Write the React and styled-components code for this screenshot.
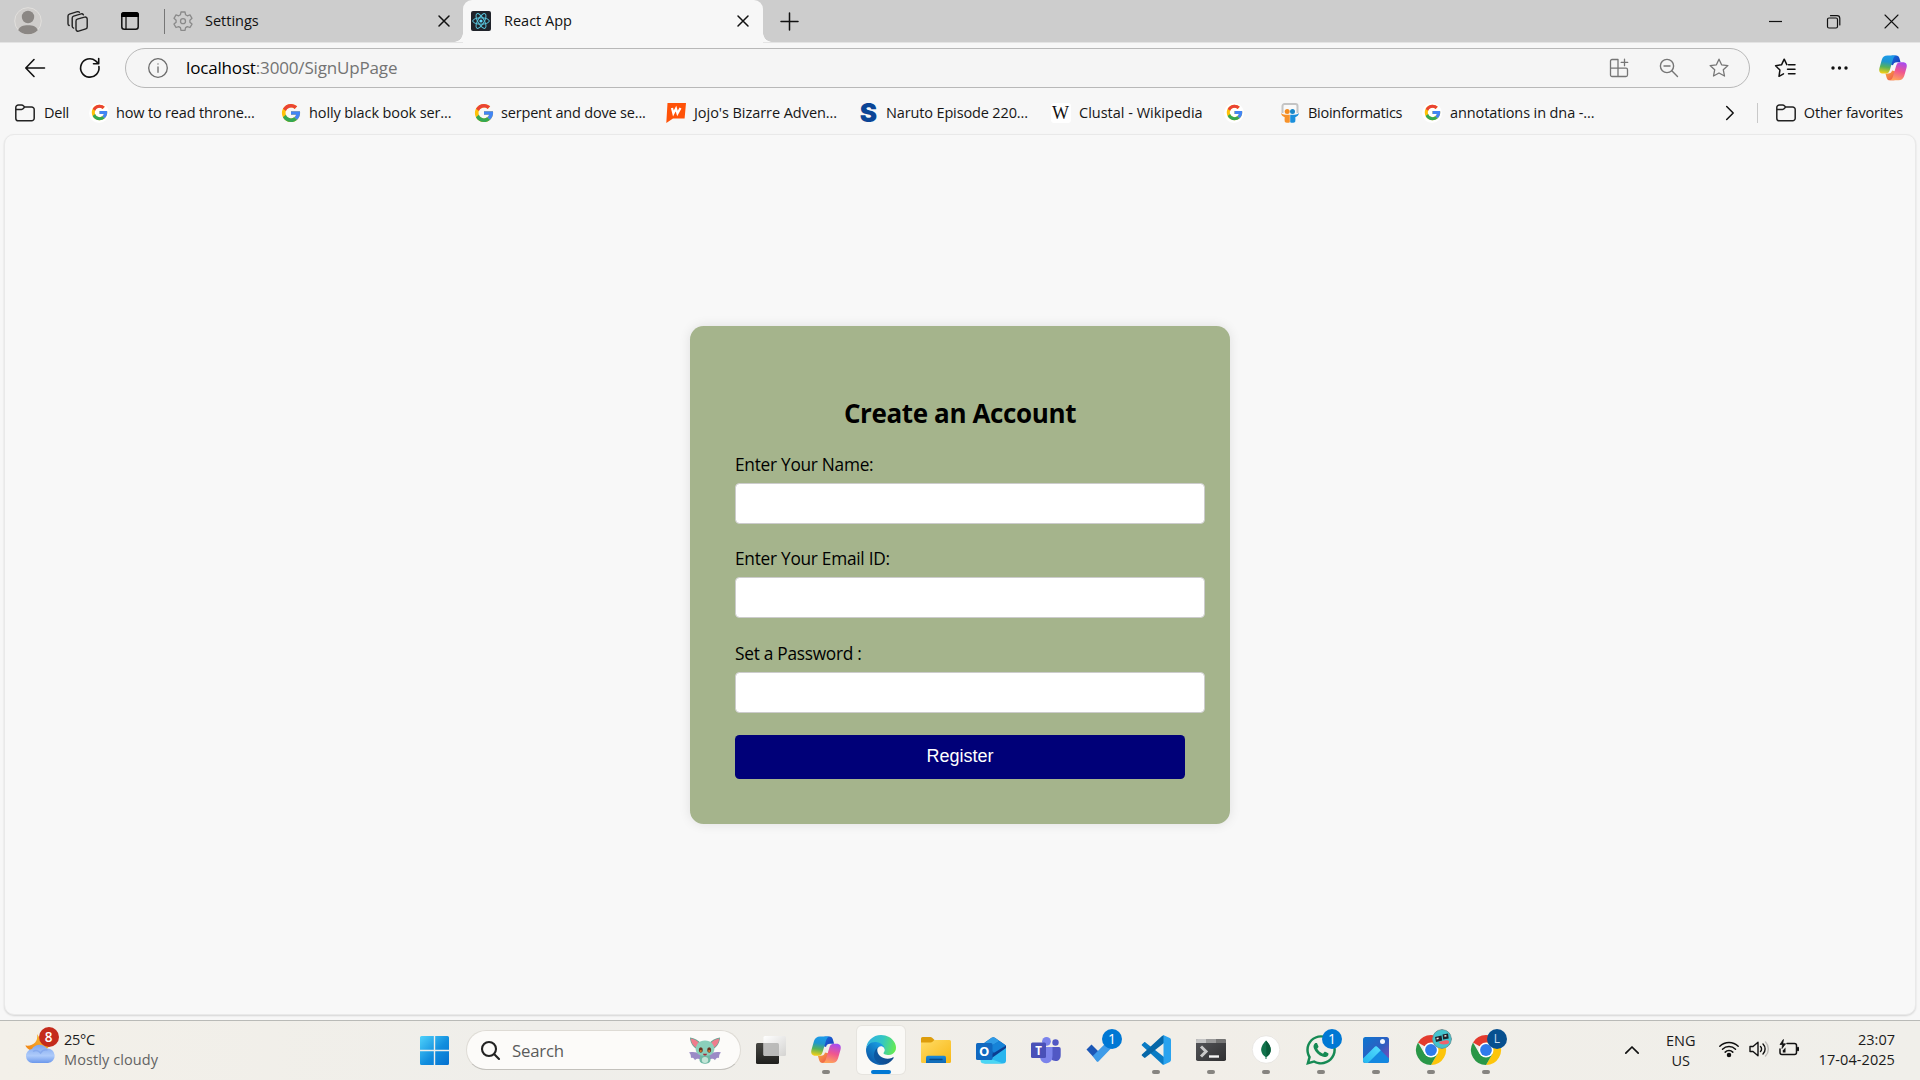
import React from "react";
import styled, { createGlobalStyle } from "styled-components";
import { FaWhatsapp } from "react-icons/fa";

const GlobalStyle = createGlobalStyle`
  * { box-sizing: border-box; }
  body { margin: 0; overflow: hidden; background: #f7f7f7; }
`;

const ui = `"Open Sans", "Noto Sans", sans-serif`;

const Screen = styled.div`
  width: 1920px;
  height: 1080px;
  display: flex;
  flex-direction: column;
  background: #f7f7f7;
  font-family: ${ui};
  font-size: 14.5px;
  color: #1b1b1b;
  overflow: hidden;
  svg { display: block; flex: none; overflow: visible; }
`;

const Label = styled.span`
  white-space: pre;
  letter-spacing: ${(p) => p.$track || 0}px;
  color: ${(p) => p.$color || "inherit"};
`;

/* ---------- tab strip ---------- */

const TabStrip = styled.header`
  height: 42px;
  flex: none;
  display: flex;
  align-items: center;
  background: #cdcdcd;
  box-shadow: 0 1px 0 #e4e4e4;
`;

const StripTools = styled.div`
  width: 164px;
  display: flex;
  align-items: center;
  padding-left: 14px;
  gap: 25px;
`;

const StripEnd = styled.div`
  margin-left: 8px;
`;

const InactiveTab = styled.div`
  width: 299px;
  height: 25px;
  display: flex;
  align-items: center;
  gap: 12px;
  padding: 0 14px 0 8px;
  border-left: 1px solid #767676;
`;

const ActiveTab = styled.div`
  position: relative;
  width: 300px;
  height: 43px;
  margin-bottom: -1px;
  display: flex;
  align-items: center;
  gap: 13px;
  padding: 0 15px 1px 8px;
  background: #f7f7f7;
  border-radius: 9px 9px 0 0;
  &::before, &::after {
    content: "";
    position: absolute;
    bottom: 1px;
    width: 9px;
    height: 9px;
  }
  &::before { left: -9px; background: radial-gradient(circle at 0 0, transparent 8.5px, #f7f7f7 9px); }
  &::after { right: -9px; background: radial-gradient(circle at 100% 0, transparent 8.5px, #f7f7f7 9px); }
`;

const TabTitle = styled(Label)`
  flex: 1;
  color: #111;
  line-height: 20px;
  margin-top: -1px;
`;

const NewTab = styled.div`
  flex: 1;
  padding-left: 18px;
`;

const WindowButtons = styled.div`
  display: flex;
  align-items: center;
  gap: 45px;
  padding-right: 22px;
`;

/* ---------- toolbar ---------- */

const Toolbar = styled.div`
  height: 50px;
  flex: none;
  display: flex;
  align-items: center;
  padding: 2px 13px 0 25px;
`;

const NavButtons = styled.div`
  width: 100px;
  display: flex;
  align-items: center;
  gap: 35px;
`;

const AddressBar = styled.div`
  width: 1625px;
  height: 40px;
  display: flex;
  align-items: center;
  padding: 0 20px 0 22px;
  border: 1px solid #b8b8b8;
  border-radius: 20px;
  background: #f5f5f5;
`;

const Url = styled.div`
  flex: 1;
  margin-left: 18px;
  font-size: 17px;
  line-height: 22px;
  margin-top: -1px;
`;

const AddressActions = styled.div`
  display: flex;
  align-items: center;
  gap: 30px;
`;

const ToolbarActions = styled.div`
  flex: 1;
  display: flex;
  align-items: center;
  justify-content: flex-end;
  gap: 29px;
`;

const MenuCopilot = styled.div`
  display: flex;
  align-items: center;
  gap: 24px;
`;

/* ---------- favourites ---------- */

const FavoritesBar = styled.nav`
  height: 42px;
  flex: none;
  display: flex;
  align-items: center;
  padding: 0 17px 1px 15px;
  color: #161616;
`;

const Favorite = styled.div`
  width: ${(p) => (p.$w ? `${p.$w}px` : "auto")};
  display: flex;
  align-items: center;
  gap: ${(p) => p.$gap || 8}px;
  flex: none;
`;

const FavIcon = styled.div`
  width: 20px;
  height: 20px;
  flex: none;
  display: flex;
  align-items: center;
  justify-content: center;
  border-radius: ${(p) => (p.$round ? "50%" : "3px")};
  background: ${(p) => (p.$plate ? "#fff" : "transparent")};
`;

const WikiGlyph = styled.span`
  font: 18px/20px "Liberation Serif", serif;
  color: #111;
  margin-left: -1px;
`;

const SGlyph = styled.span`
  font: 900 26px/20px "Inter", sans-serif;
  color: #0b4596;
  margin-left: -1px;
`;

const FavoritesEnd = styled.div`
  margin-left: auto;
  display: flex;
  align-items: center;
`;

const Divider = styled.div`
  width: 1px;
  height: 20px;
  margin: 0 18px 0 23px;
  background: #c9c9c9;
`;

/* ---------- page ---------- */

const Viewport = styled.main`
  height: 881px;
  flex: none;
  margin: 0 4px;
  display: flex;
  justify-content: center;
  align-items: flex-start;
  padding-top: 191px;
  border: 1px solid #e9e9e9;
  border-radius: 10px;
  background: #f8f8f8;
  box-shadow: 0 1px 2px rgba(0, 0, 0, 0.14);
`;

const Card = styled.form`
  width: 540px;
  height: 498px;
  padding: 69px 45px 0;
  border-radius: 13.5px;
  background: #a5b48c;
  box-shadow: 0 0 12px rgba(0, 0, 0, 0.1);
  color: #000;
`;

const Title = styled.h2`
  margin: 0 0 22px;
  font-size: 26px;
  font-weight: 700;
  line-height: 36px;
  letter-spacing: -0.38px;
  text-align: center;
  white-space: nowrap;
`;

const Field = styled.label`
  display: block;
  height: 71px;
  margin-bottom: 23.3px;
  font-size: 17.3px;
  line-height: 24.8px;
  letter-spacing: -0.27px;
`;

const Input = styled.input`
  display: block;
  width: 470px;
  height: 41px;
  margin-top: 5.2px;
  padding: 9px;
  border: 1px solid #ccc;
  border-radius: 4.5px;
  background: #fff;
  outline: none;
`;

const Register = styled.button`
  display: block;
  width: 450px;
  height: 44px;
  margin-top: -24.2px;
  padding: 0 0 1px;
  border: 0;
  border-radius: 4.5px;
  background: #000078;
  color: #fff;
  font: 18px "Liberation Sans", Arial, sans-serif;
`;

const Fields = styled.div`
  padding-bottom: 23.3px;
`;

/* ---------- taskbar ---------- */

const Taskbar = styled.footer`
  height: 60px;
  margin-top: 5px;
  flex: none;
  display: grid;
  grid-template-columns: 420px 46px 277.5px 770px 1fr;
  border-top: 1px solid #b9bab7;
  background: linear-gradient(90deg, #f3f0e9, #efeeea 28%, #f1eee8 60%, #f0efea);
`;

const Weather = styled.div`
  display: flex;
  padding: 13px 0 0 24.5px;
  gap: 9.5px;
  line-height: 20px;
`;

const WeatherIcon = styled.div`
  position: relative;
  width: 30px;
  height: 30px;
`;

const Stack = styled.div`
  display: flex;
  flex-direction: column;
  align-items: ${(p) => p.$align || "flex-start"};
  line-height: 20px;
  margin-top: ${(p) => p.$top || 0}px;
`;

const Badge = styled.span`
  position: absolute;
  left: ${(p) => (p.$left === undefined ? 25 : p.$left)}px;
  top: ${(p) => (p.$top === undefined ? 3 : p.$top)}px;
  width: 20px;
  height: 20px;
  border-radius: 50%;
  display: flex;
  align-items: center;
  justify-content: center;
  overflow: hidden;
  background: ${(p) => p.$bg || "#0078d4"};
  color: ${(p) => p.$fg || "#fff"};
  font-size: ${(p) => p.$size || 14}px;
  font-weight: ${(p) => p.$weight || 400};
  line-height: 20px;
`;

const Start = styled.div`
  padding-top: 15px;
`;

const SearchBox = styled.div`
  width: 274.5px;
  height: 40px;
  margin-top: 9px;
  display: flex;
  align-items: center;
  padding: 0 19px 0 14px;
  border: 1px solid #dedbd5;
  border-bottom-color: #c3c1bc;
  border-radius: 20px;
  background: #fcfbf9;
`;

const SearchText = styled(Label)`
  flex: 1;
  margin-left: 12px;
  font-size: 16.8px;
  color: #5b5b5b;
`;

const Apps = styled.div`
  display: grid;
  grid-template-columns: repeat(14, 55px);
  justify-items: center;
  padding-top: 5px;
`;

const AppTile = styled.div`
  position: relative;
  width: 48px;
  height: 48px;
  padding-top: 9px;
  display: flex;
  flex-direction: column;
  align-items: center;
  justify-content: space-between;
  border-radius: 5px;
  background: ${(p) => (p.$active ? "#faf9f6" : "transparent")};
  box-shadow: ${(p) => (p.$active ? "0 0 0 1px #e6e4df" : "none")};
`;

const AppIcon = styled.div`
  width: 30px;
  height: 30px;
  display: flex;
  align-items: center;
  justify-content: center;
`;

const Indicator = styled.div`
  width: ${(p) => (p.$active ? 20 : 8)}px;
  height: 4px;
  border-radius: 2px;
  background: ${(p) => (p.$active ? "#0078d4" : "#868480")};
`;

const Tray = styled.div`
  display: flex;
  align-items: flex-start;
  justify-content: flex-end;
  padding-right: 25px;
`;

const TrayIcons = styled.div`
  display: flex;
  align-items: center;
  gap: 10px;
  margin: 18px 20px 0 23px;
`;

const TrayChevron = styled.div`
  margin: 25px 27px 0 0;
`;

/* ---------- drawings ---------- */

const Line = ({ w, h = w, c = "#111", s = 1.5, children }) => (
  <svg width={w} height={h} viewBox={`0 0 ${w} ${h}`} fill="none" stroke={c} strokeWidth={s} strokeLinecap="round" strokeLinejoin="round">
    {children}
  </svg>
);

const Profile = () => (
  <svg width="28" height="28" viewBox="0 0 28 28">
    <circle cx="14" cy="14" r="13.3" fill="#cfcdcb" stroke="#e2e0dd" />
    <circle cx="14" cy="10" r="6.2" fill="#8b8784" />
    <path d="M4.2 23.3C5.6 19.5 9 18.3 14 18.3s8.400 1.200 9.800 5A13.200 13.200 0 0 1 14 27.200a13.200 13.200 0 0 1-9.800-3.900z" fill="#8b8784" />
  </svg>
);

const Workspaces = () => (
  <Line w={21} c="#222" s={1.4}>
    <path d="M10.300 8.200 17.500 6.100a2 2 0 0 1 2.700 1.900v8a2 2 0 0 1-1.400 1.900L11.600 20.200A2 2 0 0 1 9 18.300v-8a2 2 0 0 1 1.300-2.100z" />
    <path d="M16.400 3.800a2 2 0 0 0-2.300-.9L6.600 5.200A2 2 0 0 0 5.200 7.100v8.200a2 2 0 0 0 1.400 1.800" />
    <path d="M12.400 1.300a2 2 0 0 0-2-.6L2.400 3.100A2 2 0 0 0 1 5v7.700a2 2 0 0 0 1.200 1.800" />
  </Line>
);

const TabActions = () => (
  <svg width="18" height="18" viewBox="0 0 18 18">
    <rect x=".8" y=".8" width="16.400" height="16.400" rx="2.500" fill="none" stroke="#111" strokeWidth="1.500" />
    <path d="M0 3a3 3 0 0 1 3-3h12a3 3 0 0 1 3 3v2H0z" fill="#000" />
    <path d="M5 5v12" stroke="#111" strokeWidth="1.300" />
  </svg>
);

const Gear = () => (
  <Line w={20} c="#8a8a8a" s={1.3}>
    <path d="M8 1h4l.6 2.800 1.700 1 2.700-.9 2 3.400-2.100 1.900v2l2.100 1.900-2 3.400-2.700-.9-1.700 1L12 19.400H8l-.6-2.800-1.700-1-2.700.9-2-3.400 2.100-1.900v-2L1 7.300l2-3.400 2.700.9 1.700-1z" />
    <circle cx="10" cy="10.200" r="2.500" />
  </Line>
);

const Cross = ({ size = 10, s = 1.5, c }) => (
  <Line w={size} s={s} c={c}>
    <path d={`M0 0 ${size} ${size}M${size} 0 0 ${size}`} />
  </Line>
);

const ReactTile = () => (
  <svg width="20" height="20" viewBox="0 0 20 20">
    <rect width="20" height="20" rx="2" fill="#20232a" />
    <g fill="none" stroke="#58c4dc" strokeWidth="1">
      <ellipse cx="10" cy="10" rx="8.300" ry="3.200" />
      <ellipse cx="10" cy="10" rx="8.300" ry="3.200" transform="rotate(60 10 10)" />
      <ellipse cx="10" cy="10" rx="8.300" ry="3.200" transform="rotate(120 10 10)" />
    </g>
    <circle cx="10" cy="10" r="1.600" fill="#61dafb" />
  </svg>
);

const GoogleG = ({ size = 16 }) => (
  <svg width={size} height={size} viewBox="2 2 44 44">
    <path fill="#FFC107" d="M43.611 20.083H42V20H24v8h11.303c-1.649 4.657-6.080 8-11.303 8-6.627 0-12-5.373-12-12s5.373-12 12-12c3.059 0 5.842 1.154 7.961 3.039l5.657-5.657C34.046 6.053 29.268 4 24 4 12.955 4 4 12.955 4 24s8.955 20 20 20 20-8.955 20-20c0-1.341-.138-2.650-.389-3.917z" />
    <path fill="#EA4335" d="M6.306 14.691l6.571 4.819C14.655 15.108 18.961 12 24 12c3.059 0 5.842 1.154 7.961 3.039l5.657-5.657C34.046 6.053 29.268 4 24 4 16.318 4 9.656 8.337 6.306 14.691z" />
    <path fill="#34A853" d="M24 44c5.166 0 9.860-1.977 13.409-5.192l-6.190-5.238C29.211 35.091 26.715 36 24 36c-5.202 0-9.619-3.317-11.283-7.946l-6.522 5.025C9.505 39.556 16.227 44 24 44z" />
    <path fill="#4285F4" d="M43.611 20.083H42V20H24v8h11.303c-.792 2.237-2.231 4.166-4.087 5.571l6.190 5.238C36.971 39.205 44 34 44 24c0-1.341-.138-2.650-.389-3.917z" />
  </svg>
);

const Folder = () => (
  <Line w={20} h={18} c="#222" s={1.5}>
    <path d="M.8 3.500A2.600 2.600 0 0 1 3.400.9h3.100c.8 0 1.400.3 1.900.9L9.600 3h7A2.600 2.600 0 0 1 19.200 5.600v8.600a2.600 2.600 0 0 1-2.600 2.600H3.400A2.600 2.600 0 0 1 .8 14.200zM.8 5.400h5.700c.7 0 1.300-.2 1.800-.8L9.600 3" />
  </Line>
);

const Webtoon = () => (
  <svg width="20" height="20" viewBox="0 0 20 20">
    <path d="M1.500 0H20l-1.400 15.500H7L.3 20z" fill="#ff5208" />
    <path d="m6 5 1.400 5.500L10 5.600l1.500 4.900L14.500 5" fill="none" stroke="#fff" strokeWidth="2.200" />
  </svg>
);

const SlideShare = () => (
  <svg width="20" height="20" viewBox="0 0 20 20">
    <path d="M2.500 10V3a2 2 0 0 1 2-2h11a2 2 0 0 1 2 2v7" fill="#f9f9f9" stroke="#c4c4c4" strokeWidth="2" />
    <circle cx="7.200" cy="8.400" r="2.500" fill="#f38b1e" />
    <circle cx="12.500" cy="8.400" r="2.500" fill="#1787c9" />
    <path d="M1 10c2 2 4.500 1.800 8.800 1.800v7.400c-1 .9-4.300.8-5-.4-.4-1.500-.2-3-.1-4.500C2.800 13.600 1.300 12 1 10z" fill="#f7922a" />
    <path d="M19 10c-2 2-4.500 1.800-8.800 1.800v7.400c1 .9 4.300.8 5-.4.4-1.500.2-3 .1-4.500 1.900-.7 3.400-2.300 3.700-4.300z" fill="#1a8fdc" />
  </svg>
);

const Copilot = ({ id, w = 30 }) => (
  <svg width={w} height={w * 0.92} viewBox="0 0 30 27.500">
    <defs>
      <linearGradient id={`${id}a`} x1=".5" y1="0" x2=".35" y2="1">
        <stop offset="0" stopColor="#1c9bea" /><stop offset=".35" stopColor="#1e96d0" /><stop offset=".65" stopColor="#57b25a" /><stop offset="1" stopColor="#f5cf15" />
      </linearGradient>
      <linearGradient id={`${id}b`} x1=".7" y1="0" x2=".4" y2="1">
        <stop offset="0" stopColor="#a74bf0" /><stop offset=".5" stopColor="#f0568f" /><stop offset="1" stopColor="#ffa45a" />
      </linearGradient>
      <linearGradient id={`${id}c`} x1="0" y1="0" x2="1" y2="1">
        <stop offset="0" stopColor="#1670dc" /><stop offset="1" stopColor="#1a36b8" />
      </linearGradient>
      <linearGradient id={`${id}d`} x1="0" y1="0" x2="1" y2="1">
        <stop offset="0" stopColor="#f8b13c" /><stop offset="1" stopColor="#ee4a4f" />
      </linearGradient>
    </defs>
    <path d="M13.500.5h4.800c2 0 3 .9 3.600 3l1.200 4.300h-4c-2.300 0-3.500 1-4.100 3.200L12 10z" fill={`url(#${id}c)`} />
    <path d="M16.500 27h-4.800c-2 0-3-.9-3.600-3l-1.200-4.300h3c2.300 0 3.500-1 4.100-3.200L18 17.500z" fill={`url(#${id}d)`} />
    <path d="M9 .5H19c-2.600.2-3.400 2-4.200 4.800L11.600 16c-.8 2.700-1.900 3.800-4.600 3.800H4.500C1 19.800-.5 17.500.5 13.800L3 5C4 2 6 .5 9 .5z" fill={`url(#${id}a)`} />
    <path d="M21 27H11c2.600-.2 3.400-2 4.200-4.800L18.400 11.500c.8-2.700 1.900-3.800 4.600-3.800h2.500c3.500 0 5 2.300 4 6L27 22.500C26 25.500 24 27 21 27z" fill={`url(#${id}b)`} />
  </svg>
);

const starPath = "M10 1.200l2.600 5.600 6.300.8-4.600 4.200 1.200 6.200L10 15l-5.500 3 1.200-6.200L1.100 7.600l6.300-.8z";

const CloudMoon = () => (
  <svg width="30" height="30" viewBox="0 0 30 30">
    <defs>
      <linearGradient id="moon" x1="0" y1="1" x2="1" y2="0"><stop offset="0" stopColor="#f07f12" /><stop offset="1" stopColor="#f9c338" /></linearGradient>
      <linearGradient id="cloud" x1="0" y1="0" x2="0" y2="1"><stop offset="0" stopColor="#7fa6ee" /><stop offset=".6" stopColor="#aecbfa" /><stop offset="1" stopColor="#6b98ec" /></linearGradient>
    </defs>
    <path d="M12 0c3 5 7 9 13 9-1 6-6 9-12 9C7 18 2.500 15.500.3 11.500 8 12.500 13.500 8 12 0z" fill="url(#moon)" />
    <path d="M7.500 29a7 7 0 0 1-.6-13.900A9 9 0 0 1 22 14.600 7.200 7.200 0 0 1 23 29z" fill="url(#cloud)" />
    <path d="M8 17.500c3-2 6-.5 7.500 1.500 1.500-2.500 4-3.500 7-3" fill="none" stroke="#7da3ea" strokeWidth="1.500" opacity=".7" />
  </svg>
);

const WindowsLogo = () => (
  <svg width="29" height="29" viewBox="0 0 29 29">
    <defs><linearGradient id="win" gradientUnits="userSpaceOnUse" x1="0" y1="0" x2="29" y2="29"><stop offset="0" stopColor="#4fd2fb" /><stop offset=".55" stopColor="#128ede" /><stop offset="1" stopColor="#0570cf" /></linearGradient></defs>
    <path fill="url(#win)" d="M1.500 0H13.800V13.800H0V1.500A1.500 1.500 0 0 1 1.500 0zM15.200 0h12.300A1.500 1.500 0 0 1 29 1.500V13.800H15.200zM0 15.200h13.800V29H1.500A1.500 1.500 0 0 1 0 27.500zM15.200 15.200H29v12.300a1.500 1.500 0 0 1-1.500 1.500H15.200z" />
  </svg>
);

const BatCritter = () => (
  <svg width="32" height="27" viewBox="0 0 32 27">
    <path d="M12 17.500C8 15 4 14.500 0 15.500c2 1.500 1.800 3.500 2 5.500 2-.8 3 .2 4 2.200 1.500-1.700 3.500-1.700 6-.7zM20 17.500c4-2.500 8-3 12-2-2 1.500-1.800 3.500-2 5.500-2-.8-3 .2-4 2.200-1.500-1.700-3.500-1.700-6-.7z" fill="#9b8bc6" />
    <path d="M1 .5C5.500 1 9.500 3 12 6.500L7.500 12C3.500 9.500 1 5 1 .5zM31 .5C26.500 1 22.500 3 20 6.500l4.500 5.500C28.500 9.500 31 5 31 .5z" fill="#6aa694" />
    <path d="M1.800 1.500c3.700.5 6.700 2.500 8.700 5L7 10.500C4 8.500 2 5.500 1.800 1.500zM30.200 1.500c-3.700.5-6.700 2.500-8.700 5l3.500 4c3-2 5-5 5.200-9z" fill="#ef7c8d" />
    <path d="M11.500 17h9l1 5.500c0 3.500-3 4.200-5.500 4.200s-5.500-.7-5.500-4.200z" fill="#6fb8a4" />
    <path d="M16 3.500c6 0 9.300 4 9.300 8.800 0 4.200-4 6.700-9.300 6.700s-9.300-2.500-9.300-6.700c0-4.800 3.300-8.800 9.300-8.800z" fill="#8bd0bb" />
    <ellipse cx="16" cy="23" rx="3.200" ry="3" fill="#c2e5d6" />
    <ellipse cx="11.800" cy="13" rx="2" ry="2.700" fill="#6b3420" /><ellipse cx="20.200" cy="13" rx="2" ry="2.700" fill="#6b3420" />
    <circle cx="11.800" cy="14" r="1.100" fill="#d97831" /><circle cx="20.200" cy="14" r="1.100" fill="#d97831" />
    <path d="M14 16.700h4c-.3 2.500-3.700 2.500-4 0z" fill="#a72d39" />
  </svg>
);

const TaskView = () => (
  <svg width="30" height="30" viewBox="0 0 30 30">
    <defs>
      <linearGradient id="tvd" x1="0" y1="0" x2="0" y2="1"><stop offset="0" stopColor="#474743" /><stop offset="1" stopColor="#1f1f1d" /></linearGradient>
      <linearGradient id="tvl" x1="0" y1="0" x2="1" y2="1"><stop offset="0" stopColor="#fff" /><stop offset="1" stopColor="#d4d3d1" /></linearGradient>
    </defs>
    <rect x="0" y="8" width="23" height="21" rx="1.500" fill="url(#tvd)" />
    <rect x="7.500" y="1" width="22.500" height="20" rx="1.500" fill="url(#tvl)" />
    <path d="M7.500 8H21.500A1.500 1.500 0 0 1 23 9.500V21H9a1.500 1.500 0 0 1-1.500-1.500z" fill="#b3b3b1" opacity=".85" />
  </svg>
);

const Edge = () => (
  <svg width="30" height="30" viewBox="0 0 256 256">
    <defs>
      <linearGradient id="e1" x1="60" y1="178" x2="236" y2="178" gradientUnits="userSpaceOnUse"><stop offset="0" stopColor="#0c59a4" /><stop offset="1" stopColor="#114a8b" /></linearGradient>
      <linearGradient id="e2" x1="150" y1="100" x2="45" y2="215" gradientUnits="userSpaceOnUse"><stop offset="0" stopColor="#1b9de2" /><stop offset=".4" stopColor="#1384cc" /><stop offset="1" stopColor="#0d5fae" /></linearGradient>
      <linearGradient id="e3" x1="10" y1="60" x2="250" y2="120" gradientUnits="userSpaceOnUse"><stop offset="0" stopColor="#31b3e0" /><stop offset=".5" stopColor="#33c6c4" /><stop offset="1" stopColor="#66eb4f" /></linearGradient>
    </defs>
    <path fill="url(#e1)" d="M231 190.500c-3.400 1.800-6.900 3.400-10.500 4.700a101.500 101.500 0 0 1-35.900 6.500c-47.300 0-88.500-32.500-88.500-74.300 0-11.400 6.300-21.900 16.400-27.300-42.800 1.800-53.800 46.400-53.800 72.500 0 73.900 68.100 81.400 82.800 81.400 7.900 0 19.800-2.300 27-4.600l1.300-.4a128.300 128.300 0 0 0 66.600-52.800 4 4 0 0 0-5.400-5.700z" />
    <path fill="url(#e2)" d="M105.700 241.400a79.200 79.200 0 0 1-22.700-21.300 80.700 80.700 0 0 1 29.500-120c3.200-1.500 8.500-4.100 15.600-4 10.100.1 19.600 4.900 25.700 13 4 5.400 6.300 11.900 6.400 18.700 0-.2 24.500-79.600-80-79.600-43.900 0-80 41.700-80 78.200-.2 19.300 4 38.500 12.100 56a128 128 0 0 0 156.300 67.100 75.500 75.500 0 0 1-62.800-8z" />
    <path fill="url(#e3)" d="M152.300 148.900c-.9 1-3.300 2.500-3.300 5.700 0 2.600 1.700 5.100 4.700 7.200 14.400 10 41.500 8.700 41.500 8.700 10.700 0 21.100-2.900 30.300-8.300A61.400 61.400 0 0 0 256 109.400c.3-22.400-8-37.300-11.300-43.900C223.500 23.900 177.700 0 128 0A128 128 0 0 0 0 126.200c.5-36.500 36.800-66 80-66 3.500 0 23.500.3 42 10.100 16.300 8.600 24.900 19 30.800 29.200 6.200 10.700 7.300 24.100 7.300 29.500 0 5.300-2.700 13.300-7.800 19.900z" />
  </svg>
);

const Explorer = () => (
  <svg width="30" height="30" viewBox="0 0 30 30">
    <defs>
      <linearGradient id="fo" x1="0" y1="0" x2="1" y2="1"><stop offset="0" stopColor="#ffdc66" /><stop offset="1" stopColor="#f8b714" /></linearGradient>
      <linearGradient id="fb" x1="0" y1="0" x2="0" y2="1"><stop offset="0" stopColor="#1c8ad9" /><stop offset="1" stopColor="#0e68b5" /></linearGradient>
    </defs>
    <path d="M0 3.500A1.500 1.500 0 0 1 1.500 2h7.800c.8 0 1.300.2 1.900.8L13.500 5v5H0z" fill="#dd9d0c" />
    <path d="M0 7.500h9.500c.9 0 1.500-.3 2-.8l1-1c.5-.5 1.100-.7 1.800-.7h14.200A1.500 1.500 0 0 1 30 6.500v20a1.500 1.500 0 0 1-1.500 1.500h-27A1.500 1.500 0 0 1 0 26.500z" fill="url(#fo)" />
    <path d="M5 28v-5.500A1.800 1.800 0 0 1 6.800 20.700h16.400a1.800 1.800 0 0 1 1.800 1.800V28z" fill="url(#fb)" />
    <path d="M9 24.500h12" stroke="#084a86" strokeWidth="1.300" strokeLinecap="round" />
  </svg>
);

const Outlook = () => (
  <svg width="30" height="30" viewBox="0 0 30 30">
    <path d="M4.500 10.500 15.600 2.800a3 3 0 0 1 3.300 0L30 10.500 17 20z" fill="#0f5fb4" />
    <path d="m9 7.500 6.600-4.700a3 3 0 0 1 3.300 0l4.500 3.100L12 13z" fill="#2e9be6" />
    <path d="M23.400 5.900 30 10.500 19 18l-8-5z" fill="#1683d8" />
    <path d="m30 10.500-18 11v4l18-9z" fill="#0b3d91" />
    <path d="M30 13v12.500a3 3 0 0 1-3 3H8z" fill="#29b5ee" />
    <path d="M4.500 20 27 28.500H8a3.500 3.500 0 0 1-3.500-3.500z" fill="#4bd6f4" />
    <rect y="8" width="16.500" height="17" rx="1.500" fill="#1068c0" />
    <text x="8.200" y="21" fontFamily="Open Sans, sans-serif" fontSize="13" fontWeight="700" fill="#fff" textAnchor="middle">O</text>
  </svg>
);

const Teams = () => (
  <svg width="30" height="30" viewBox="0 0 30 30">
    <circle cx="24.500" cy="7.500" r="3.200" fill="#5158c4" />
    <path d="M19 12h9a1.700 1.700 0 0 1 1.700 1.700v6.500c0 3.500-2 5.800-5 5.800-4 0-5.700-3-5.700-6z" fill="#5158c4" />
    <circle cx="15.500" cy="6.300" r="4.400" fill="#7b83eb" />
    <path d="M9 12h12.500v8.500c0 5-2.500 7.700-6.200 7.700S9 25.500 9 21z" fill="#7b83eb" />
    <rect y="7.500" width="15" height="15.500" rx="1.500" fill="#4950b8" />
    <text x="7.500" y="19.500" fontFamily="Open Sans, sans-serif" fontSize="11.500" fontWeight="700" fill="#fff" textAnchor="middle">T</text>
  </svg>
);

const Todo = () => (
  <svg width="30" height="30" viewBox="0 0 30 30">
    <path d="M.5 14.500 5.500 9.500l11 11-5 6z" fill="#1b57b6" />
    <path d="M6.800 21 24.300 3.500l5.200 5.200-16.800 17.500a1.500 1.500 0 0 1-2.200 0z" fill="#3e9be8" />
  </svg>
);

const VSCode = () => (
  <svg width="30" height="30" viewBox="0 0 30 30">
    <path d="M1 9.200 3 7.400c.5-.4 1-.4 1.500 0L23 22v7.500c-.8.3-1.500 0-2-.5L.9 10.500c-.4-.4-.3-.9.100-1.300z" fill="#0a7bc4" />
    <path d="M1 20.800 3 22.600c.5.4 1 .4 1.500 0L23 8V.5c-.8-.3-1.500 0-2 .5L.9 19.500c-.4.4-.3.900.1 1.300z" fill="#0667a8" />
    <path d="M22.800 29.800c-.8.3-1.300.1-1.900-.4.700.7 1.600.1 1.600-.8V1.400c0-.9-.9-1.500-1.600-.8.600-.5 1.100-.7 1.900-.4l6 2.900c.8.400 1.200 1 1.200 1.800v20.200c0 .8-.4 1.400-1.200 1.800z" fill="#2aa3ef" />
  </svg>
);

const Terminal = () => (
  <svg width="30" height="30" viewBox="0 0 30 30">
    <defs><linearGradient id="tm" x1="0" y1="0" x2="1" y2="1"><stop offset="0" stopColor="#55565a" /><stop offset="1" stopColor="#303031" /></linearGradient></defs>
    <rect y="4" width="30" height="22" rx="1.800" fill="url(#tm)" />
    <path d="M0 8V5.500A1.500 1.500 0 0 1 1.500 4H10v4z" fill="#c5c5c5" /><path d="M10 4h10v4H10z" fill="#9a9a9a" /><path d="M20 4h8.500A1.500 1.500 0 0 1 30 5.500V8H20z" fill="#747474" />
    <path d="m5 11.500 5 5-5 5" fill="none" stroke="#c9c9c9" strokeWidth="3" />
    <path d="M13 21.500h10" stroke="#f4f4f4" strokeWidth="2.400" />
  </svg>
);

const Mongo = () => (
  <svg width="30" height="30" viewBox="0 0 30 30">
    <circle cx="15" cy="14.500" r="13.800" fill="#fff" stroke="#e4e2de" strokeWidth=".8" />
    <path d="M15 5.500c4 4 5.200 7.500 4.700 10.500-.4 2.600-2 4.500-4.200 6V24h-1v-2c-2.200-1.500-3.800-3.400-4.200-6C9.800 13 11 9.500 15 5.500z" fill="#11734c" />
    <path d="M15 5.500c4 4 5.200 7.500 4.700 10.500-.4 2.600-2 4.500-4.200 6z" fill="#0a5c3b" />
  </svg>
);

const Photos = () => (
  <svg width="30" height="30" viewBox="0 0 30 30">
    <defs>
      <linearGradient id="ph" x1="0" y1="0" x2="1" y2="1"><stop offset="0" stopColor="#0d76d0" /><stop offset=".55" stopColor="#2f5dc0" /><stop offset="1" stopColor="#8b4bb8" /></linearGradient>
      <linearGradient id="pm" x1="0" y1="1" x2="1" y2="0"><stop offset="0" stopColor="#22b4ee" /><stop offset="1" stopColor="#55ddff" /></linearGradient>
      <clipPath id="pc"><rect x="2" y="2" width="26" height="26" rx="2.500" /></clipPath>
    </defs>
    <g clipPath="url(#pc)">
      <rect x="2" y="2" width="26" height="26" fill="url(#ph)" />
      <path d="M13.300 12.200a2.400 2.400 0 0 1 3.400 0L29 24.500V28H8z" fill="#1488e0" />
      <path d="M1 24.500 13.300 12.200a2.400 2.400 0 0 1 3.400 0L19.800 15.300 6.500 28.500H1z" fill="url(#pm)" />
    </g>
    <circle cx="21.500" cy="6.500" r="2.500" fill="#f1f6fd" />
  </svg>
);

const Chrome = () => (
  <svg width="30" height="30" viewBox="0 0 30 30">
    <path d="M15 15 2 7.500A15 15 0 0 1 28 7.500z" fill="#e33b2e" />
    <path d="M28 7.500A15 15 0 0 1 15 30l6.500-11.200L15 7.500z" fill="#fdc50b" />
    <path d="M2 7.500A15 15 0 0 0 15 30l6.500-11.200L15 15 8.500 18.800z" fill="#2a9747" />
    <circle cx="15" cy="15" r="7.500" fill="#fff" />
    <circle cx="15" cy="15" r="5.900" fill="#2f7bea" />
  </svg>
);

const AvatarArt = () => (
  <svg width="20" height="20" viewBox="0 0 20 20">
    <circle cx="10" cy="10" r="9.500" fill="#43c3cd" stroke="#6e8f92" />
    <path d="m3 8 6.500-1.500.7 5L4 13zM10.500 5.500l5.500-1 .7 5-5.500 1z" fill="#20242c" />
    <path d="m4.500 9 2-.5.2 1.500-2 .5zM12.300 6.300l2-.4.2 1.500-2 .4z" fill="#f1e6df" />
    <path d="M7 13c3-.5 6-2.500 9-1.500 2 1 1 3.500-1.500 3.800-3 .4-7 .2-7.500-2.300z" fill="#f0626c" />
  </svg>
);

/* ---------- content ---------- */

const favorites = [
  { text: "Dell", icon: <Folder />, w: 74, gap: 9, track: -0.25 },
  { text: "how to read throne...", icon: <GoogleG size={17} />, plate: true, round: true, w: 192, gap: 7, track: -0.17 },
  { text: "holly black book ser...", icon: <GoogleG size={20} />, w: 193, track: -0.11 },
  { text: "serpent and dove se...", icon: <GoogleG size={20} />, w: 192, gap: 7, track: -0.18 },
  { text: "Jojo's Bizarre Adven...", icon: <Webtoon />, w: 193, track: -0.05 },
  { text: "Naruto Episode 220...", icon: <SGlyph>S</SGlyph>, w: 192, gap: 7, track: -0.14 },
  { text: "Clustal - Wikipedia", icon: <WikiGlyph>W</WikiGlyph>, plate: true, w: 173, track: 0 },
  { text: "", icon: <GoogleG size={17} />, plate: true, round: true, w: 56 },
  { text: "Bioinformatics", icon: <SlideShare />, w: 142, track: -0.27 },
  { text: "annotations in dna -...", icon: <GoogleG size={17} />, plate: true, round: true, w: 180, track: -0.11 },
];

const apps = [
  { icon: <TaskView /> },
  { icon: <Copilot id="tc" />, run: true },
  { icon: <Edge />, run: true, active: true },
  { icon: <Explorer /> },
  { icon: <Outlook /> },
  { icon: <Teams /> },
  { icon: <Todo />, badge: <Badge>1</Badge> },
  { icon: <VSCode />, run: true },
  { icon: <Terminal />, run: true },
  { icon: <Mongo />, run: true },
  { icon: <FaWhatsapp size={34} color="#168a54" />, run: true, badge: <Badge>1</Badge> },
  { icon: <Photos />, run: true },
  { icon: <Chrome />, run: true, badge: <Badge $bg="transparent"><AvatarArt /></Badge> },
  { icon: <Chrome />, run: true, badge: <Badge $bg="#07508f" $fg="#c4dcf2" $size={12}>L</Badge> },
];

const fields = [
  { label: "Enter Your Name:", type: "text" },
  { label: "Enter Your Email ID:", type: "email" },
  { label: "Set a Password :", type: "password" },
];

export default function App() {
  return (
    <Screen>
      <GlobalStyle />
      <TabStrip>
        <StripTools>
          <Profile />
          <Workspaces />
          <StripEnd><TabActions /></StripEnd>
        </StripTools>
        <InactiveTab>
          <Gear />
          <TabTitle>Settings</TabTitle>
          <Cross />
        </InactiveTab>
        <ActiveTab>
          <ReactTile />
          <TabTitle>React App</TabTitle>
          <Cross />
        </ActiveTab>
        <NewTab>
          <Line w={17}><path d="M8.500 0v17M0 8.500h17" /></Line>
        </NewTab>
        <WindowButtons>
          <Line w={13} s={1.2}><path d="M0 6.500h13" strokeLinecap="butt" /></Line>
          <Line w={13} s={1.2}>
            <path d="M2 3h7a1.500 1.500 0 0 1 1.500 1.500v7A1.500 1.500 0 0 1 9 13H2a1.500 1.500 0 0 1-1.500-1.500v-7A1.500 1.500 0 0 1 2 3zM3.500.7H10A2.800 2.800 0 0 1 12.800 3.500V10" />
          </Line>
          <Cross size={13} s={1.1} />
        </WindowButtons>
      </TabStrip>

      <Toolbar>
        <NavButtons>
          <Line w={20} s={1.6}><path d="M19.500 10H1M9 1.500.8 10 9 18.500" /></Line>
          <Line w={20} s={1.6}>
            <path d="M18.900 8.500A9.200 9.200 0 1 1 15.600 2.800L18.500 5.600M18.700.6v5.200h-5.200" />
          </Line>
        </NavButtons>
        <AddressBar>
          <Line w={20} c="#6b6b6b" s={1.3}>
            <circle cx="10" cy="10" r="9.300" />
            <path d="M10 9v5.300M10 5.800v.3" />
          </Line>
          <Url>
            <Label $track={-0.16} $color="#000">localhost</Label>
            <Label $track={-0.16} $color="#737373">:3000/SignUpPage</Label>
          </Url>
          <AddressActions>
            <Line w={20} c="#757575" s={1.3}>
              <path d="M1.500 10.200V3a1.500 1.500 0 0 1 1.500-1.500h6v17H3A1.500 1.500 0 0 1 1.500 17zM1.500 10.200h15.500A1.500 1.500 0 0 1 18.500 11.700V17A1.500 1.500 0 0 1 17 18.500H9M15.500 1.200v6.500M12.200 4.400h6.500" />
            </Line>
            <Line w={20} c="#757575" s={1.4}>
              <circle cx="8" cy="8" r="6.600" /><path d="M5 8h6M12.800 12.800l5.700 5.700" />
            </Line>
            <Line w={20} c="#757575" s={1.3}><path d={starPath} /></Line>
          </AddressActions>
        </AddressBar>
        <ToolbarActions>
          <Line w={20} s={1.5}>
            <path d="M8.500 15.800 4 18.300l.9-6.200L.6 7.700l5.900-.9L9.200 1.200l2.600 5.400M13.500 6.700H20M12.500 11.200H20M13.500 15.700H20" />
          </Line>
          <MenuCopilot>
            <Line w={31} h={20} s={0}>
              <circle cx="9" cy="10" r="1.700" fill="#111" /><circle cx="15.500" cy="10" r="1.700" fill="#111" /><circle cx="22" cy="10" r="1.700" fill="#111" />
            </Line>
            <Copilot id="bc" w={28} />
          </MenuCopilot>
        </ToolbarActions>
      </Toolbar>

      <FavoritesBar>
        {favorites.map((f, i) => (
          <Favorite key={i} $w={f.w} $gap={f.gap}>
            <FavIcon $plate={f.plate} $round={f.round}>{f.icon}</FavIcon>
            <Label $track={f.track}>{f.text}</Label>
          </Favorite>
        ))}
        <FavoritesEnd>
          <Line w={8} h={14}><path d="m.7.5 6.500 6.500-6.500 6.500" /></Line>
          <Divider />
          <Favorite $gap={8}>
            <Folder />
            <Label $track={-0.18}>Other favorites</Label>
          </Favorite>
        </FavoritesEnd>
      </FavoritesBar>

      <Viewport>
        <Card>
          <Title>Create an Account</Title>
          <Fields>
            {fields.map((f) => (
              <Field key={f.label}>
                {f.label}
                <Input type={f.type} />
              </Field>
            ))}
          </Fields>
          <Register type="button">Register</Register>
        </Card>
      </Viewport>

      <Taskbar>
        <Weather>
          <WeatherIcon>
            <CloudMoon />
            <Badge $bg="#c42b1c" $left={14} $top={-7} $weight={600} $size={13.5}>8</Badge>
          </WeatherIcon>
          <Stack $top={-4}>
            <Label $track={-0.3}>25°C</Label>
            <Label $track={0.09} $color="#636363">Mostly cloudy</Label>
          </Stack>
        </Weather>
        <Start><WindowsLogo /></Start>
        <SearchBox>
          <Line w={19} s={2.1} c="#222"><circle cx="8" cy="8" r="7" /><path d="m13.300 13.300 4.700 4.700" /></Line>
          <SearchText $track={-0.2}>Search</SearchText>
          <BatCritter />
        </SearchBox>
        <Apps>
          {apps.map((a, i) => (
            <AppTile key={i} $active={a.active}>
              <AppIcon>{a.icon}</AppIcon>
              {a.run && <Indicator $active={a.active} />}
              {a.badge}
            </AppTile>
          ))}
        </Apps>
        <Tray>
          <TrayChevron><Line w={14} h={8} s={1.7}><path d="m.8 7.200 6.200-6.200 6.200 6.200" /></Line></TrayChevron>
          <Stack $align="center" $top={10}>
            <Label>ENG</Label>
            <Label>US</Label>
          </Stack>
          <TrayIcons>
            <Line w={20} s={1.5}>
              <path d="M.8 7.300a13 13 0 0 1 18.400 0M3.500 10.300a9.200 9.200 0 0 1 13 0M6.200 13.100a5.400 5.400 0 0 1 7.600 0" />
              <circle cx="10" cy="16" r="1.500" fill="#111" />
            </Line>
            <Line w={20} s={1.4}>
              <path d="M1 7.500h3l5-4.300v13.600l-5-4.300H1zM11.500 7.500a3.500 3.500 0 0 1 0 5M14 5a7 7 0 0 1 0 10" />
              <path d="M16.500 3a10 10 0 0 1 0 14" stroke="#bdbbb7" />
            </Line>
            <Line w={20} s={1.5}>
              <path d="M8 4.500h7.500a2 2 0 0 1 2 2v7a2 2 0 0 1-2 2H3a2 2 0 0 1-2-2V10" />
              <path d="M19 8.700v2.600" strokeWidth="2" />
              <path d="M4.200.8 1 5.500h2.500L3 9.500l3.500-4.700H4z" fill="#111" strokeWidth=".8" />
              <path d="M3.800 11.500 6.500 8.500v5H3.800z" fill="#111" stroke="none" />
            </Line>
          </TrayIcons>
          <Stack $align="flex-end" $top={9}>
            <Label>23:07</Label>
            <Label $track={0.08}>17-04-2025</Label>
          </Stack>
        </Tray>
      </Taskbar>
    </Screen>
  );
}
